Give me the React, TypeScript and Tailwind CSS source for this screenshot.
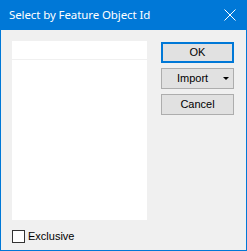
import { useState } from 'react';

export default function App() {
  const [exclusive, setExclusive] = useState(false);

  return (
    <div className="flex h-[251px] w-[247px] flex-col border border-t-0 border-[#0078d7] bg-[#f0f0f0]">
      {/* title bar */}
      <div className="flex h-[30px] shrink-0 items-center justify-between bg-[#0078d7] pl-[8px] pr-[9px] text-white">
        <span className="font-['Noto_Sans',sans-serif] text-[11.5px] leading-none tracking-[-0.1px]">
          Select by Feature Object Id
        </span>
        <svg width="12" height="12" viewBox="0 0 12 12" className="mr-[1px]">
          <path d="M0.5 0.5 L11.5 11.5 M11.5 0.5 L0.5 11.5" stroke="white" strokeWidth="1" />
        </svg>
      </div>

      <div className="flex flex-1 flex-col pl-[11px] pr-[11px] pt-[11px] font-['Liberation_Sans',sans-serif] text-[11px] text-black">
        <div className="flex h-[179px] gap-[14px]">
          <div className="flex w-[135px] flex-col bg-white">
            <div className="h-[19px] border-b border-[#f0f0f0]" />
            <div className="flex-1" />
          </div>

          <div className="flex w-[73px] flex-col gap-[5px] pt-[1px]">
            <button className="flex h-[21px] items-center justify-center border-2 border-[#0078d7] bg-[#e1e1e1]">
              OK
            </button>
            <button className="relative flex h-[21px] items-center border border-[#adadad] bg-[#e1e1e1] pl-[15px]">
              Import
              <span className="absolute right-[4px] top-[8px] h-0 w-0 border-x-[3px] border-t-[3px] border-x-transparent border-t-black" />
            </button>
            <button className="flex h-[21px] items-center justify-center border border-[#adadad] bg-[#e1e1e1]">
              Cancel
            </button>
          </div>
        </div>

        <label className="mt-[8px] flex items-center gap-[3px]">
          <input
            type="checkbox"
            checked={exclusive}
            onChange={(e) => setExclusive(e.target.checked)}
            className="h-[13px] w-[13px] appearance-none border border-[#333] bg-white"
          />
          <span>Exclusive</span>
        </label>
      </div>
    </div>
  );
}
